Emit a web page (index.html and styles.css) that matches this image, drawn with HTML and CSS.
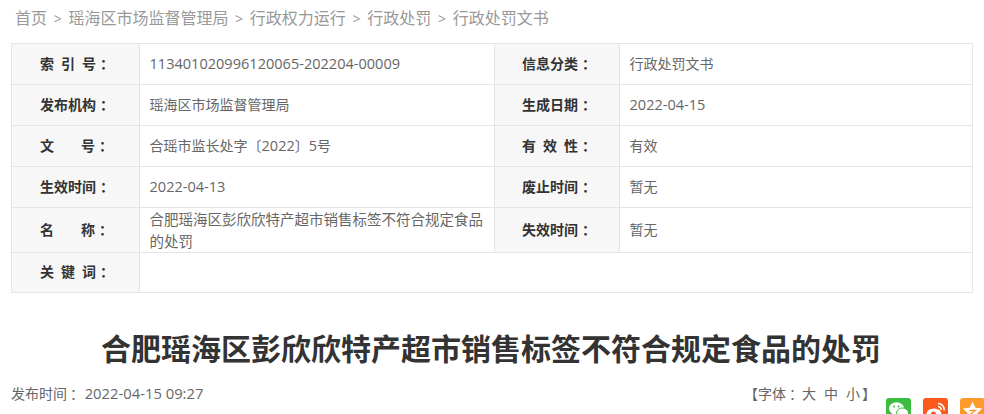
FILE: index.html
```html
<!DOCTYPE html>
<html lang="zh-CN">
<head>
<meta charset="utf-8">
<title>行政处罚文书</title>
<link rel="stylesheet" href="styles.css">
</head>
<body>
<div class="page">
  <nav class="crumbs">
    <a>首页</a><span class="sep">&gt;</span><a>瑶海区市场监督管理局</a><span class="sep">&gt;</span><a>行政权力运行</a><span class="sep">&gt;</span><a>行政处罚</a><span class="sep">&gt;</span><a>行政处罚文书</a>
  </nav>
  <table class="info">
    <colgroup><col class="c1"><col class="c2"><col class="c3"><col class="c4"></colgroup>
    <tr class="row">
      <th>索 引 号<span class="colon">：</span></th><td><span class="num">113401020996120065-202204-00009</span></td>
      <th class="right">信息分类<span class="colon">：</span></th><td>行政处罚文书</td>
    </tr>
    <tr class="row">
      <th>发布机构<span class="colon">：</span></th><td>瑶海区市场监督管理局</td>
      <th class="right">生成日期<span class="colon">：</span></th><td><span class="num">2022-04-15</span></td>
    </tr>
    <tr class="row">
      <th>文<span class="gap"></span>号<span class="colon">：</span></th><td>合瑶市监长处字〔<span class="num">2022</span>〕<span class="num">5</span>号</td>
      <th class="right">有 效 性<span class="colon">：</span></th><td>有效</td>
    </tr>
    <tr class="row">
      <th>生效时间<span class="colon">：</span></th><td><span class="num">2022-04-13</span></td>
      <th class="right">废止时间<span class="colon">：</span></th><td>暂无</td>
    </tr>
    <tr class="row-tall">
      <th>名<span class="gap"></span>称<span class="colon">：</span></th><td class="wrap"><span class="wrap-text">合肥瑶海区彭欣欣特产超市销售标签不符合规定食品的处罚</span></td>
      <th class="right">失效时间<span class="colon">：</span></th><td>暂无</td>
    </tr>
    <tr class="row-last">
      <th>关 键 词<span class="colon">：</span></th><td colspan="3"></td>
    </tr>
  </table>
  <h1 class="title">合肥瑶海区彭欣欣特产超市销售标签不符合规定食品的处罚</h1>
  <div class="meta">
    <span class="date">发布时间<span class="colon-sm">：</span> <span class="num num-date">2022-04-15 09:27</span></span>
    <span class="font-size">【字体<span class="colon-sm">：</span><span class="opt first">大</span><span class="opt">中</span><span class="opt">小</span><span class="close">】</span></span>
  </div>
  <div class="share">
    <span class="ico wechat">
      <svg viewBox="0 0 25 25" width="25" height="25"><ellipse cx="10.5" cy="10.5" rx="7.5" ry="6.3" fill="#fff"/><path d="M6.5 15l-1 3 3.5-2z" fill="#fff"/><ellipse cx="16.5" cy="15" rx="6" ry="5" fill="#fff" stroke="#3bbd3f"/><circle cx="8" cy="8.5" r="1" fill="#3bbd3f"/><circle cx="12.5" cy="8.5" r="1" fill="#3bbd3f"/></svg>
    </span>
    <span class="ico weibo">
      <svg viewBox="0 0 25 25" width="25" height="25"><ellipse cx="11" cy="16" rx="7.5" ry="5.5" fill="#fff"/><circle cx="10.5" cy="16" r="2.5" fill="#fc5a1b"/><path d="M15 5.5a6 6 0 0 1 6 7M15 8.5a3 3 0 0 1 3 3.5" fill="none" stroke="#fff" stroke-width="1.6"/></svg>
    </span>
    <span class="ico qzone">
      <svg viewBox="0 0 25 25" width="25" height="25"><path d="M12.5 3.5l3 6.2 6.8.8-5 4.6 1.4 6.7-6.2-3.4-6.2 3.4 1.4-6.7-5-4.6 6.8-.8z" fill="#fff"/><path d="M9.5 12.5h6l-6 4.5h6" fill="none" stroke="#fd9a2c" stroke-width="1.3"/></svg>
    </span>
  </div>
</div>
</body>
</html>
```
FILE: styles.css
```css
html, body {
  margin: 0;
  padding: 0;
  background: #fff;
}
body {
  font-family: "Open Sans", "Noto Sans CJK SC", sans-serif;
  color: #666;
}
.page {
  width: 984px;
  height: 414px;
  overflow: hidden;
  position: relative;
  box-sizing: border-box;
  padding: 0 11px;
}
.crumbs {
  height: 43px;
  line-height: 36px;
  font-size: 16px;
  color: #999;
  padding-left: 4px;
  white-space: nowrap;
}
.crumbs .sep {
  margin: 0 6.7px;
  font-size: 14px;
}
.num {
  font-size: 14.55px;
  vertical-align: 0.5px;
  line-height: 1;
}
.num-date {
  font-size: 14.8px;
}
.colon {
  margin-left: 4px;
  margin-right: -4px;
}
.colon-sm {
  margin-left: 3px;
  margin-right: -3px;
}
.info {
  width: 962px;
  table-layout: fixed;
  border-collapse: collapse;
  font-size: 14px;
}
.c1 { width: 128px; }
.c2 { width: 355px; }
.c3 { width: 125px; }
.info th, .info td {
  border: 1px solid #e5e5e5;
  padding: 0;
}
.info th {
  background: #f7f7f7;
  color: #333;
  font-weight: 700;
  font-size: 14px;
  line-height: 20px;
  text-align: left;
  padding-left: 28px;
  padding-bottom: 1px;
  white-space: nowrap;
  word-spacing: 3.4px;
}
.info th.right {
  padding-left: 27px;
}
.gap {
  display: inline-block;
  width: 27px;
}
.info td {
  padding-left: 9.5px;
  padding-right: 5px;
  color: #666;
  line-height: 20px;
}
.row { height: 41px; }
.row-tall { height: 45px; }
.row-last { height: 40px; }
.row-last th { padding-bottom: 1px; }
.info td.wrap {
  font-size: 14.5px;
  line-height: 22px;
}
.wrap-text {
  display: block;
  transform: translateY(1px);
}
.title {
  margin: 33px 2px 0 0;
  height: 46px;
  line-height: 46px;
  font-size: 30px;
  font-weight: 700;
  color: #333;
  text-align: center;
}
.meta {
  display: flex;
  justify-content: space-between;
  margin-top: 12px;
  font-size: 14px;
  line-height: 20px;
}
.font-size {
  margin-right: 97px;
}
.opt {
  margin-left: 8px;
}
.opt.first {
  margin-left: 2px;
}
.close {
  margin-left: 2px;
}
.share {
  position: absolute;
  top: 398px;
  left: 886px;
  display: flex;
  gap: 12px;
}
.ico {
  width: 25px;
  height: 25px;
  border-radius: 3px;
  display: block;
}
.ico svg { display: block; }
.wechat { background: #3bbd3f; }
.weibo { background: #fc5a1b; }
.qzone { background: #fd9a2c; }
```
